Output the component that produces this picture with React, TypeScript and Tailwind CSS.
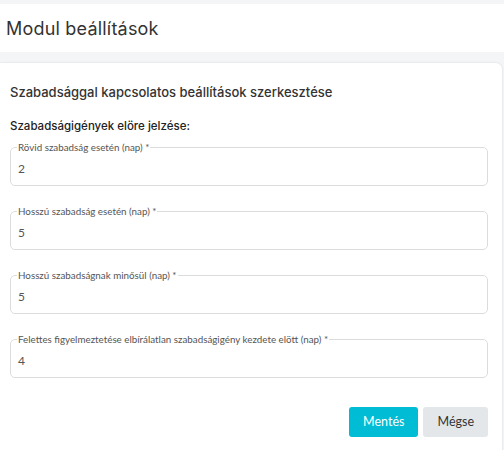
const fields = [
  { label: 'Rövid szabadság esetén (nap) *', value: '2' },
  { label: 'Hosszú szabadság esetén (nap) *', value: '5' },
  { label: 'Hosszú szabadságnak minősül (nap) *', value: '5' },
  { label: 'Felettes figyelmeztetése elbírálatlan szabadságigény kezdete elött (nap) *', value: '4' },
];

function OutlinedField({ label, value }: { label: string; value: string }) {
  return (
    <fieldset className="border border-[#dcdcdc] rounded-[5px] px-[6px] h-[44px]">
      <legend className="px-[1px] text-[9.8px] leading-[10px] text-[#555]">{label}</legend>
      <div className="text-[12px] leading-[14px] text-[#555] pt-[10px] pl-[1px]">{value}</div>
    </fieldset>
  );
}

export default function App() {
  return (
    <div className="w-[504px] h-[450px] bg-[#f4f5f6] pt-[4px] overflow-hidden font-['Lato','Noto_Sans',sans-serif]">
      <div className="bg-white h-[48px] flex items-center px-[6px]">
        <h1 className="text-[18px] text-[#333] font-['Inter',sans-serif] font-normal tracking-[0.2px]">Modul beállítások</h1>
      </div>
      <div className="mt-[11px] mr-[2px] bg-white rounded-r-[6px] shadow-[0_0_2px_rgba(0,0,0,0.15)] h-[400px] pt-[21px] px-[10px]">
        <h2 className="text-[13px] text-[#333] font-['Inter',sans-serif] font-medium leading-[16px]">
          Szabadsággal kapcsolatos beállítások szerkesztése
        </h2>
        <h3 className="mt-[19px] text-[11.5px] text-[#222] font-['Inter',sans-serif] font-medium leading-[14px]">
          Szabadságigények elöre jelzése:
        </h3>
        <div className="mt-[9px] mr-[4px] flex flex-col gap-[20px]">
          {fields.map((f) => (
            <OutlinedField key={f.label} label={f.label} value={f.value} />
          ))}
        </div>
        <div className="mt-[29px] mr-[4px] flex justify-end gap-[5px]">
          <button className="h-[30px] px-[14px] rounded-[3px] bg-[#00bcd4] text-white text-[12.5px]">Mentés</button>
          <button className="h-[30px] px-[14px] rounded-[3px] bg-[#e3e7ea] text-[#333] text-[12.5px]">Mégse</button>
        </div>
      </div>
    </div>
  );
}
